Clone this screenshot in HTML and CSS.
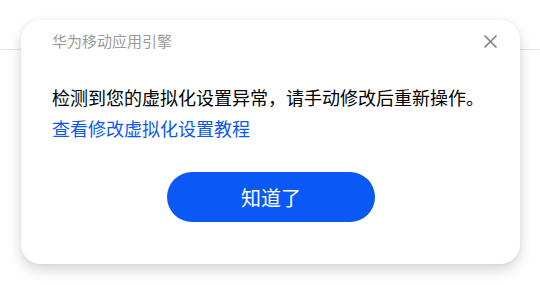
FILE: index.html
```html
<!DOCTYPE html>
<html lang="zh-CN">
<head>
<meta charset="utf-8">
<link rel="stylesheet" href="styles.css">
</head>
<body>
<div class="topbar"></div>
<div class="dialog">
  <div class="header">
    <span class="title">华为移动应用引擎</span>
    <svg class="close" width="15" height="15" viewBox="0 0 15 15"><path d="M1.5 1.5 L13.5 13.5 M13.5 1.5 L1.5 13.5" stroke="#7f7f7f" stroke-width="1.6" fill="none"/></svg>
  </div>
  <p class="message">检测到您的虚拟化设置异常，请手动修改后重新操作。</p>
  <a class="link">查看修改虚拟化设置教程</a>
  <div class="actions">
    <button class="btn">知道了</button>
  </div>
</div>
</body>
</html>
```

FILE: styles.css
```css
html, body {
  margin: 0;
  padding: 0;
  background: #ffffff;
  font-family: "Noto Sans CJK SC", "Noto Sans", sans-serif;
}
.topbar {
  height: 49px;
  border-bottom: 1px solid #e6e6e6;
}
.dialog {
  position: absolute;
  left: 21px;
  top: 20px;
  width: 499px;
  box-sizing: border-box;
  padding: 11px 30px 42px 31px;
  background: #ffffff;
  border-radius: 20px;
  box-shadow: 0 6px 14px rgba(0, 0, 0, 0.16), 0 0 6px rgba(0, 0, 0, 0.04);
}
.header {
  display: flex;
  align-items: center;
  justify-content: space-between;
  height: 20px;
}
.title {
  font-size: 15px;
  line-height: 20px;
  color: #9a9a9a;
}
.close {
  display: block;
  margin-right: -8px;
}
.message {
  margin: 32px 0 0 0;
  font-size: 18px;
  line-height: 28px;
  color: #000000;
  white-space: nowrap;
}
.link {
  display: block;
  margin-top: 3px;
  font-size: 18px;
  line-height: 28px;
  color: #0a59f7;
}
.actions {
  display: flex;
  justify-content: center;
  margin-top: 30px;
}
.btn {
  width: 208px;
  height: 50px;
  border: none;
  border-radius: 25px;
  background: #0a59f7;
  color: #ffffff;
  font-family: "Noto Sans CJK SC", "Noto Sans", sans-serif;
  font-size: 20px;
  padding: 0;
}
```
